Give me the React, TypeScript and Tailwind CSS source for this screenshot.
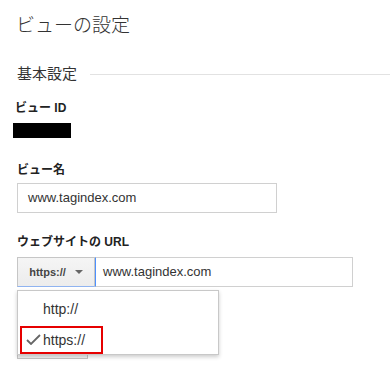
import React from "react";

const jp = { fontFamily: '"Liberation Sans", "Noto Sans CJK JP", sans-serif' };

export default function App() {
  return (
    <div className="relative w-[390px] h-[374px] overflow-hidden bg-white text-[#222]" style={jp}>
      <div className="pl-[17px] pt-[14px]">
        <div className="text-[19px] leading-[24px] ml-[-1px] text-[#333] font-light">ビューの設定</div>

        <div className="mt-[26px] flex items-center h-[20px]">
          <span className="text-[15px] leading-[20px] text-[#333]">基本設定</span>
          <div className="ml-[13px] flex-1 h-px bg-[#e2e2e2]" />
        </div>

        <div className="mt-[15px] h-[18px] text-[12px] leading-[18px] font-bold ml-[-2px]">ビュー ID</div>
        <div className="mt-[6px] ml-[-4px] w-[58px] h-[15px] bg-black" />

        <div className="mt-[23px] h-[18px] text-[12px] leading-[18px] font-bold">ビュー名</div>
        <div className="mt-[4px] w-[260px] h-[30px] border border-[#d0d0d0] flex items-center pl-[10px] text-[13px] text-[#333]">
          www.tagindex.com
        </div>

        <div className="mt-[20px] h-[18px] text-[12px] leading-[18px] font-bold">ウェブサイトの URL</div>

        <div className="mt-[6px] flex h-[30px]">
          <div className="w-[78px] h-[30px] border border-[#c6c6c6] border-b-[#8fb3f0] bg-gradient-to-b from-[#f5f5f5] to-[#ececec] flex items-center justify-center gap-[9px] text-[11px] font-bold text-[#444]">
            <span>https://</span>
            <svg width="8" height="4" viewBox="0 0 8 4"><path d="M0 0h8L4 4z" fill="#666" /></svg>
          </div>
          <div className="w-[258px] h-[30px] border border-[#d0d0d0] border-l-[#4d90fe] flex items-center pl-[7px] text-[13px] text-[#333]">
            www.tagindex.com
          </div>
        </div>

        <div className="mt-[40px] w-[71px] h-[32px] border border-[#c6c6c6] bg-[#f3f3f3]" />
      </div>

      <div className="absolute left-[17px] top-[290px] w-[202px] h-[65px] bg-white border border-[#c8c8c8] shadow-[0_2px_4px_rgba(0,0,0,0.2)]">
        <div className="h-[32px] flex items-center pl-[25px] pt-[4px] text-[14px] text-[#333]">http://</div>
        <div className="absolute left-[2px] top-[35px] w-[83px] h-[28px] border-2 border-[#e60000]" />
        <div className="absolute left-[8px] top-[43px]">
          <svg width="15" height="11" viewBox="0 0 15 11">
            <path d="M1 6l4 4L14 1" fill="none" stroke="#666" strokeWidth="1.8" />
          </svg>
        </div>
        <div className="absolute left-[25px] top-[38px] h-[22px] flex items-center text-[14px] text-[#333]">https://</div>
      </div>
    </div>
  );
}
